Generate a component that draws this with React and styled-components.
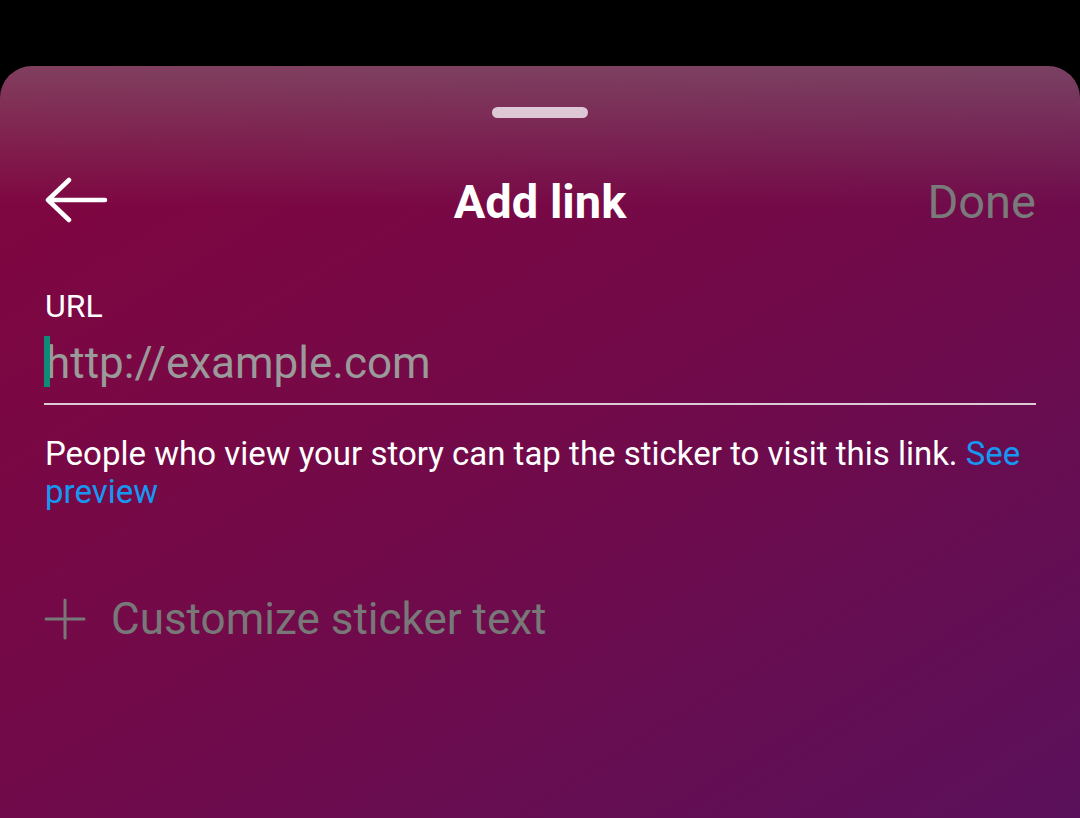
import styled, { createGlobalStyle } from "styled-components";

const GlobalStyle = createGlobalStyle`
  html, body {
    margin: 0;
    padding: 0;
    background: #000;
  }
  body {
    font-family: Roboto, "Noto Sans", sans-serif;
  }
`;

const Page = styled.div`
  width: 1080px;
  height: 818px;
  padding-top: 66px;
  box-sizing: border-box;
  overflow: hidden;
`;

const Sheet = styled.div`
  height: 752px;
  border-radius: 32px 32px 0 0;
  background:
    linear-gradient(to bottom, rgba(128, 128, 128, 0.47), rgba(128, 128, 128, 0) 140px),
    linear-gradient(148deg, #82053f 0%, #720a49 50%, #5a105a 100%);
  display: flex;
  flex-direction: column;
  padding: 41px 44px 0 44px;
  box-sizing: border-box;
`;

const Handle = styled.div`
  align-self: center;
  width: 96px;
  height: 11px;
  border-radius: 6px;
  background: #dec8d6;
`;

const Header = styled.div`
  position: relative;
  display: flex;
  align-items: center;
  justify-content: space-between;
  height: 70px;
  margin-top: 49px;
`;

const BackButton = styled.button`
  background: none;
  border: none;
  padding: 0;
  margin-left: 1px;
  width: 64px;
  height: 50px;
  display: flex;
  align-items: center;
  cursor: pointer;
`;

const Title = styled.h1`
  position: absolute;
  left: 50%;
  transform: translateX(-50%);
  margin: 0;
  font-size: 47px;
  font-weight: 700;
  color: #fff;
  line-height: 1;
  top: 11px;
  white-space: nowrap;
`;

const DoneButton = styled.button`
  background: none;
  border: none;
  padding: 0;
  font-family: inherit;
  font-size: 47px;
  color: #7a7a7a;
  line-height: 1;
  margin-top: -1px;
`;

const Field = styled.div`
  margin-top: 52px;
  display: flex;
  flex-direction: column;
`;

const Label = styled.div`
  font-size: 32px;
  color: #fff;
  line-height: 34px;
  margin-left: 1px;
`;

const InputRow = styled.div`
  position: relative;
  display: flex;
  align-items: flex-start;
  height: 78px;
  border-bottom: 2px solid #dccad4;
  padding-bottom: 2px;
`;

const Caret = styled.span`
  position: absolute;
  left: 0;
  top: 13px;
  width: 6px;
  height: 51px;
  background: #0d8a78;
`;

const Input = styled.input`
  flex: 1;
  background: transparent;
  border: none;
  outline: none;
  padding: 0 0 0 2px;
  margin: 12px 0 0 0;
  font-family: inherit;
  font-size: 44px;
  color: #fff;
  height: 56px;
  &::placeholder {
    color: #9a9a9a;
  }
`;

const Hint = styled.p`
  margin: 30px 0 0 1px;
  font-size: 33px;
  line-height: 38px;
  color: #fff;
`;

const Link = styled.a`
  color: #1597f2;
  text-decoration: none;
`;

const CustomizeRow = styled.div`
  display: flex;
  align-items: center;
  gap: 25px;
  margin-top: 82px;
  color: #787878;
  font-size: 44px;
`;

const BackIcon = () => (
  <svg width="64" height="50" viewBox="0 0 64 50" fill="none">
    <path
      d="M3 23 H60 M24 3 L3 23 L24 43"
      stroke="#fff"
      strokeWidth="4.5"
      strokeLinecap="round"
      strokeLinejoin="round"
    />
  </svg>
);

const PlusIcon = () => (
  <svg width="42" height="42" viewBox="0 0 42 42" fill="none">
    <path d="M21 2 V40 M2 21 H40" stroke="#787878" strokeWidth="3" strokeLinecap="round" />
  </svg>
);

export default function App() {
  return (
    <>
      <GlobalStyle />
      <Page>
        <Sheet>
          <Handle />
          <Header>
            <BackButton>
              <BackIcon />
            </BackButton>
            <Title>Add link</Title>
            <DoneButton>Done</DoneButton>
          </Header>
          <Field>
            <Label>URL</Label>
            <InputRow>
              <Caret />
              <Input placeholder="http://example.com" />
            </InputRow>
          </Field>
          <Hint>
            People who view your story can tap the sticker to visit this link.{" "}
            <Link>See preview</Link>
          </Hint>
          <CustomizeRow>
            <PlusIcon />
            <span>Customize sticker text</span>
          </CustomizeRow>
        </Sheet>
      </Page>
    </>
  );
}
